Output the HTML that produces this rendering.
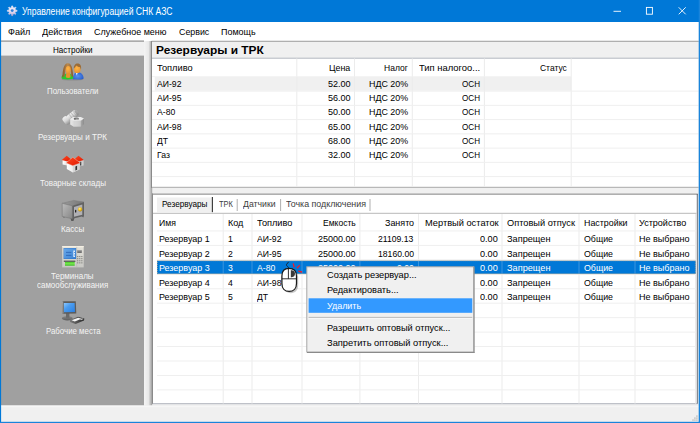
<!DOCTYPE html>
<html lang="ru">
<head>
<meta charset="utf-8">
<title>Управление конфигурацией СНК АЗС</title>
<style>
*{box-sizing:border-box;margin:0;padding:0}
html,body{width:700px;height:423px;overflow:hidden;background:#f0f0f0}
body{position:relative;font-family:"Liberation Sans",sans-serif;color:#000}
svg{position:absolute;left:0;top:0}
.t{position:absolute;white-space:nowrap;transform-origin:0 50%}
</style>
</head>
<body>
<svg id="bg" width="700" height="423" viewBox="0 0 700 423">
<rect x="0" y="0" width="700" height="423" fill="#f0f0f0"/>
<rect x="0" y="0" width="700" height="22" fill="#0078d7"/>
<rect x="1" y="22" width="698" height="19" fill="#fff"/>
<rect x="1" y="41" width="143" height="365" fill="#a0a0a0"/>
<rect x="1" y="40.6" width="143" height="1.1" fill="#6e6e6e"/>
<rect x="1" y="41.6" width="143.3" height="14" fill="#f0f0f0"/>
<defs><linearGradient id="sp" x1="0" x2="1" y1="0" y2="0"><stop offset="0" stop-color="#f4f4f4"/><stop offset="0.55" stop-color="#e8e8e8"/><stop offset="1" stop-color="#9a9a9a"/></linearGradient></defs>
<rect x="144" y="41" width="8.2" height="365" fill="url(#sp)"/>
<rect x="151.5" y="40.8" width="547.2" height="1" fill="#8c8c8c"/>
<rect x="151" y="41" width="1" height="147" fill="#8a8a8a"/>
<rect x="152" y="41.8" width="546.6" height="16.2" fill="#f0f0f0"/>
<rect x="152" y="58.3" width="546.6" height="129.2" fill="#fff"/>
<rect x="152" y="57.7" width="546.6" height="1" fill="#b4b8c0"/>
<rect x="152" y="186.8" width="546.6" height="1" fill="#a8a8a8"/>
<rect x="154.7" y="76.9" width="416.5" height="13.8" fill="#f0f0f0"/>
<rect x="296.3" y="58.5" width="1" height="128.5" fill="#ececec"/>
<rect x="354" y="58.5" width="1" height="128.5" fill="#ececec"/>
<rect x="411.8" y="58.5" width="1" height="128.5" fill="#ececec"/>
<rect x="483.9" y="58.5" width="1" height="128.5" fill="#ececec"/>
<rect x="570.7" y="58.5" width="1" height="128.5" fill="#ececec"/>
<rect x="152" y="90.6" width="546.6" height="1" fill="#efefef"/>
<rect x="152" y="104.85" width="546.6" height="1" fill="#efefef"/>
<rect x="152" y="119.1" width="546.6" height="1" fill="#efefef"/>
<rect x="152" y="133.35" width="546.6" height="1" fill="#efefef"/>
<rect x="152" y="147.6" width="546.6" height="1" fill="#efefef"/>
<rect x="152" y="161.85" width="546.6" height="1" fill="#efefef"/>
<rect x="152" y="176.1" width="546.6" height="1" fill="#efefef"/>
<rect x="152" y="76.3" width="419.5" height="0.8" fill="#f0f0f0"/>
<rect x="152.2" y="193.7" width="545.6" height="1.2" fill="#6e6e6e"/>
<rect x="152" y="193.5" width="1" height="210.5" fill="#8a8a8a"/>
<rect x="153" y="194.6" width="543.8" height="209" fill="#fff"/>
<rect x="696.8" y="194" width="1" height="210" fill="#6c7078"/>
<rect x="152.6" y="403.2" width="545" height="1" fill="#b0b4bc"/>
<rect x="157" y="197.5" width="54.8" height="14.7" fill="#f0f0f0"/>
<rect x="211.8" y="197" width="1.2" height="15.2" fill="#404040"/>
<rect x="236.7" y="199" width="1" height="12" fill="#b0b0b0"/>
<rect x="280.1" y="199" width="1" height="12" fill="#b0b0b0"/>
<rect x="369.5" y="199" width="1" height="12" fill="#b0b0b0"/>
<rect x="153" y="212.8" width="543.5" height="1" fill="#b8b8b8"/>
<rect x="222.7" y="214" width="1" height="189.5" fill="#ececec"/>
<rect x="251.5" y="214" width="1" height="189.5" fill="#ececec"/>
<rect x="301.5" y="214" width="1" height="189.5" fill="#ececec"/>
<rect x="359.4" y="214" width="1" height="189.5" fill="#ececec"/>
<rect x="418" y="214" width="1" height="189.5" fill="#ececec"/>
<rect x="501.5" y="214" width="1" height="189.5" fill="#ececec"/>
<rect x="578.5" y="214" width="1" height="189.5" fill="#ececec"/>
<rect x="634.5" y="214" width="1" height="189.5" fill="#ececec"/>
<rect x="695" y="214" width="1" height="189.5" fill="#ececec"/>
<rect x="157" y="230.45" width="539" height="1" fill="#efefef"/>
<rect x="157" y="244.9" width="539" height="1" fill="#efefef"/>
<rect x="157" y="259.35" width="539" height="1" fill="#efefef"/>
<rect x="157" y="273.8" width="539" height="1" fill="#efefef"/>
<rect x="157" y="288.25" width="539" height="1" fill="#efefef"/>
<rect x="157" y="302.7" width="539" height="1" fill="#efefef"/>
<rect x="157" y="317.15" width="539" height="1" fill="#efefef"/>
<rect x="157" y="331.6" width="539" height="1" fill="#efefef"/>
<rect x="157" y="346.05" width="539" height="1" fill="#efefef"/>
<rect x="157" y="360.5" width="539" height="1" fill="#efefef"/>
<rect x="157" y="374.95" width="539" height="1" fill="#efefef"/>
<rect x="157" y="389.4" width="539" height="1" fill="#efefef"/>
<rect x="157" y="260.7" width="538.8" height="13.2" fill="#0078d7"/>
<rect x="222.7" y="261" width="1" height="12.8" fill="#3a94df"/>
<rect x="251.5" y="261" width="1" height="12.8" fill="#3a94df"/>
<rect x="301.5" y="261" width="1" height="12.8" fill="#3a94df"/>
<rect x="359.4" y="261" width="1" height="12.8" fill="#3a94df"/>
<rect x="418" y="261" width="1" height="12.8" fill="#3a94df"/>
<rect x="501.5" y="261" width="1" height="12.8" fill="#3a94df"/>
<rect x="578.5" y="261" width="1" height="12.8" fill="#3a94df"/>
<rect x="634.5" y="261" width="1" height="12.8" fill="#3a94df"/>
<rect x="157.4" y="260.7" width="538" height="13.1" fill="none" stroke="#f0b878" stroke-width="0.7" stroke-dasharray="1 1"/>
<rect x="1" y="405.2" width="698" height="18" fill="#f0f0f0"/>
<rect x="1" y="406.3" width="698" height="0.8" fill="#f8f8f8"/>
<rect x="696.2" y="419.4" width="1.4" height="1.4" fill="#bcbcbc"/>
<rect x="694.2" y="419.4" width="1.4" height="1.4" fill="#bcbcbc"/>
<rect x="692.3" y="419.4" width="1.4" height="1.4" fill="#bcbcbc"/>
<rect x="696.2" y="417.4" width="1.4" height="1.4" fill="#bcbcbc"/>
<rect x="694.2" y="417.4" width="1.4" height="1.4" fill="#bcbcbc"/>
<rect x="696.2" y="415.4" width="1.4" height="1.4" fill="#bcbcbc"/>
<rect x="0" y="0" width="1.1" height="423" fill="#0078d7"/>
<rect x="698.7" y="0" width="1.3" height="423" fill="#1a84da"/>
<rect x="0" y="421.8" width="700" height="1.2" fill="#1a84da"/>
<defs><linearGradient id="gg" x1="0" y1="0" x2="0" y2="1"><stop offset="0" stop-color="#f2eefa"/><stop offset="0.6" stop-color="#e2daf0"/><stop offset="1" stop-color="#b9a6cf"/></linearGradient></defs><path d="M11.60 7.35 L11.66 5.93 L12.74 5.93 L12.80 7.35 L14.21 7.94 L15.26 6.98 L16.02 7.74 L15.06 8.79 L15.65 10.20 L17.07 10.26 L17.07 11.34 L15.65 11.40 L15.06 12.81 L16.02 13.86 L15.26 14.62 L14.21 13.66 L12.80 14.25 L12.74 15.67 L11.66 15.67 L11.60 14.25 L10.19 13.66 L9.14 14.62 L8.38 13.86 L9.34 12.81 L8.75 11.40 L7.33 11.34 L7.33 10.26 L8.75 10.20 L9.34 8.79 L8.38 7.74 L9.14 6.98 L10.19 7.94Z" fill="url(#gg)" stroke="url(#gg)" stroke-width="0.6" stroke-linejoin="round"/><circle cx="12.2" cy="10.600000000000001" r="1.45" fill="#2f7fd6"/>
<defs>
<linearGradient id="uh" x1="0" y1="0" x2="1" y2="0"><stop offset="0" stop-color="#8a5a2c"/><stop offset="0.5" stop-color="#b98a50"/><stop offset="1" stop-color="#8a5a2c"/></linearGradient>
<radialGradient id="uf" cx="0.45" cy="0.35" r="0.7"><stop offset="0" stop-color="#ffb648"/><stop offset="1" stop-color="#e8902a"/></radialGradient>
<linearGradient id="ug" x1="0" y1="0" x2="0" y2="1"><stop offset="0" stop-color="#3fb83a"/><stop offset="1" stop-color="#1fd02a"/></linearGradient>
<radialGradient id="ub" cx="0.45" cy="0.55" r="0.7"><stop offset="0" stop-color="#5a94ee"/><stop offset="1" stop-color="#1f52c4"/></radialGradient>
</defs>
<g>
<ellipse cx="72.5" cy="79.400" rx="11" ry="1.200" fill="#000" opacity="0.12"/>
<path d="M72.8 79.200c0-3.500 1.600-6.800 4.600-7.200c3.200 0 6.200 2.800 6.200 6.200c0 1-2.800 1.300-5.600 1.300z" fill="url(#ub)"/>
<path d="M75.600 72.600l1.200 2.800l0.900-2.400z" fill="#e8f0ff"/>
<ellipse cx="77.300" cy="69.400" rx="3.300" ry="3.700" fill="url(#uf)"/>
<path d="M73.800 68.600c-0.200-3.200 1.600-5.200 3.800-5.200c2.800 0 4 2.600 3.400 6c-0.400-0.800-0.800-1.600-1-2.400c-1.600-0.200-3-0.800-3.800-1.600c-0.600 1.200-1.400 2.400-2.400 3.200z" fill="#9c6c36"/>
<path d="M61.500 78c0-2.600 1.600-4 3.600-4.200h5.200c2 0.200 3 1.600 3 4.200c0 1-2.600 1.400-5.900 1.400s-5.900-0.400-5.900-1.400z" fill="url(#ug)"/>
<path d="M62.400 77.200c0.300-6.400 1.100-14 5.500-14c4.400 0 5 7.600 5.300 13.600c-0.600 0.300-1.300-0.300-1.900-1.300l-0.700-5.700h-5l-0.900 6c-0.700 1.100-1.500 1.600-2.300 1.400z" fill="url(#uh)"/>
<path d="M66.300 73h3.800l0.500 4.200c-1.500 1-3.300 1-4.800 0z" fill="#e8922c"/>
<ellipse cx="68.200" cy="69.800" rx="2.600" ry="3.800" fill="url(#uf)"/>
</g>
<defs>
<linearGradient id="n1" x1="0" y1="0" x2="1" y2="0"><stop offset="0" stop-color="#e6e6e6"/><stop offset="0.45" stop-color="#d2d2d2"/><stop offset="1" stop-color="#8c8c8c"/></linearGradient>
<linearGradient id="n3" x1="0" y1="0" x2="0" y2="1"><stop offset="0" stop-color="#f2f2f2"/><stop offset="0.5" stop-color="#d6d6d6"/><stop offset="1" stop-color="#8e8e8e"/></linearGradient>
<linearGradient id="n2" x1="0" y1="0" x2="1" y2="1"><stop offset="0" stop-color="#efefef"/><stop offset="1" stop-color="#9c9c9c"/></linearGradient>
</defs>
<g>
<g transform="translate(1.300 0.400) rotate(-38 69 117)">
<rect x="61.200" y="112.600" width="5.800" height="8.800" rx="2.200" fill="url(#n3)"/>
<rect x="66" y="113.600" width="12" height="6.800" rx="2.600" fill="url(#n3)"/>
<rect x="69.500" y="113.800" width="0.900" height="6.400" fill="#9a9a9a" opacity="0.55"/>
<rect x="72" y="113.800" width="0.900" height="6.400" fill="#9a9a9a" opacity="0.55"/>
<rect x="74.500" y="113.800" width="0.900" height="6.400" fill="#9a9a9a" opacity="0.55"/>
<rect x="75.800" y="114" width="2.200" height="6" rx="1.200" fill="#8a8a8a" opacity="0.7"/>
</g>
<path d="M70.200 119.200l3-2.200h7.600l3.200 1.600v5.600l-3.200 2.400h-7.400l-3.200-2z" fill="url(#n1)"/>
<path d="M70.200 119.200l3-2.200h7.600l3.200 1.600l-3.200 2.200h-7.400z" fill="#ececec"/>
<path d="M73.400 120.800h7.400v5.800h-7.400z" fill="#d4d4d4" opacity="0.7"/>
<ellipse cx="76.300" cy="118.800" rx="2.600" ry="1.200" fill="#6a6a6a"/>
<ellipse cx="76.900" cy="119.200" rx="1.700" ry="0.700" fill="#b8b8b8"/>
</g>
<defs>
<linearGradient id="hr" x1="0" y1="0" x2="1" y2="1"><stop offset="0" stop-color="#ff4a22"/><stop offset="1" stop-color="#e01800"/></linearGradient>
<linearGradient id="hw" x1="0" y1="0" x2="1" y2="0"><stop offset="0" stop-color="#ffffff"/><stop offset="1" stop-color="#d8d8d8"/></linearGradient>
</defs>
<g>
<path d="M62.600 159.800h5.800v6l-5.800-1.400z" fill="url(#hw)"/>
<path d="M66.700 155.800l4.800 4l-4 1.800l-5.800-1.600z" fill="url(#hr)"/>
<path d="M78.800 160.200l4.800-0.400v5.600l-4.800 1.200z" fill="#d0d0d0"/>
<path d="M80 161.800h1.300v3.600h-1.300z" fill="#444"/>
<path d="M78.500 155.800l5.300 4.200l-5 1.600l-5-1.800z" fill="url(#hr)"/>
<path d="M66.800 163l6 2l6.800-2.200v6.600l-6.800 3l-6-3.400z" fill="url(#hw)"/>
<path d="M72.800 165l6.800-2.200v6.600l-6.800 3z" fill="#cfcfcf" opacity="0.75"/>
<path d="M75.400 166.400l1.700-0.600v4l-1.700 0.800z" fill="#333"/>
<path d="M72.750 157.300l7.600 5.600l-7.600 2.800l-6.600-2.800z" fill="url(#hr)" stroke="#ffd8cc" stroke-width="0.350"/>
</g>
<defs>
<linearGradient id="s1" x1="0" y1="0" x2="1" y2="1"><stop offset="0" stop-color="#bcbcbc"/><stop offset="1" stop-color="#868686"/></linearGradient>
<linearGradient id="s2" x1="0" y1="0" x2="1" y2="0"><stop offset="0" stop-color="#9a9a9a"/><stop offset="1" stop-color="#767676"/></linearGradient>
<radialGradient id="s3" cx="0.4" cy="0.35" r="0.7"><stop offset="0" stop-color="#fff08a"/><stop offset="0.5" stop-color="#f0c020"/><stop offset="1" stop-color="#b08000"/></radialGradient>
</defs>
<g>
<path d="M62.800 216l0.800 1.800l1.800-0.800zM70.400 218l0.900 3h2.200l0.900-3zM81.800 216.200l1.400 1.400l0.800-1.800z" fill="#5a5a5a"/>
<path d="M62.200 203.300l11.500-2.900l10.200 1.600l-11.500 3.800z" fill="url(#s2)" stroke="#7c7c7c" stroke-width="0.500"/>
<path d="M62.200 203.300l10.200 2.500v13l-10.200-2.400z" fill="url(#s1)" stroke="#787878" stroke-width="0.600"/>
<path d="M72.400 205.800l11.600-3.700v14l-11.600 2.700z" fill="#626262"/>
<path d="M74 207l8.300-2.600v10.400l-8.300 2z" fill="#b0b0b4"/>
<rect x="75" y="209.800" width="1.300" height="2.800" rx="0.600" fill="#222"/>
<circle cx="80.100" cy="209.400" r="2.100" fill="url(#s3)"/>
</g>
<defs>
<linearGradient id="a1" x1="0" y1="0" x2="0" y2="1"><stop offset="0" stop-color="#f4efe2"/><stop offset="0.1" stop-color="#e2e0d8"/><stop offset="1" stop-color="#c8c8c4"/></linearGradient>
<linearGradient id="a2" x1="0" y1="0" x2="1" y2="1"><stop offset="0" stop-color="#6aa8e8"/><stop offset="1" stop-color="#3a82d4"/></linearGradient>
<linearGradient id="a3" x1="0" y1="0" x2="0" y2="1"><stop offset="0" stop-color="#48c828"/><stop offset="0.5" stop-color="#78e850"/><stop offset="1" stop-color="#38b820"/></linearGradient>
</defs>
<g>
<rect x="62.200" y="246" width="21.500" height="21.400" fill="url(#a1)"/>
<rect x="62.200" y="246" width="21.500" height="0.800" fill="#f6f0e4"/>
<rect x="63.600" y="248" width="12.600" height="11" fill="#2f6fc0"/>
<rect x="64" y="248.400" width="11.800" height="10.200" fill="url(#a2)"/>
<rect x="66" y="251.900" width="5.400" height="0.800" fill="#2a62b4"/>
<rect x="66" y="254.900" width="5.400" height="0.800" fill="#2a62b4"/>
<path d="M73.400 250.400h1.500v1.600h-0.800v1h0.800v1.600h-0.800v1h0.800v1.400h-1.500z" fill="#f4f8ff"/>
<rect x="77.200" y="250.400" width="4.600" height="2.600" fill="#707070"/>
<rect x="77.200" y="250.400" width="4.600" height="0.900" fill="#a0a0a0"/>
<rect x="63.800" y="260.600" width="11.600" height="1.300" fill="#555"/>
<rect x="65" y="261.900" width="9.700" height="3.800" fill="url(#a3)"/>
<rect x="76.600" y="246.800" width="0.500" height="20.500" fill="#b4b4b0"/>
<rect x="77.20" y="256.00" width="1.100" height="1.100" fill="#7c7c78"/><rect x="79.25" y="256.00" width="1.100" height="1.100" fill="#7c7c78"/><rect x="81.30" y="256.00" width="1.100" height="1.100" fill="#7c7c78"/><rect x="77.20" y="258.10" width="1.100" height="1.100" fill="#7c7c78"/><rect x="79.25" y="258.10" width="1.100" height="1.100" fill="#7c7c78"/><rect x="81.30" y="258.10" width="1.100" height="1.100" fill="#7c7c78"/><rect x="77.20" y="260.20" width="1.100" height="1.100" fill="#7c7c78"/><rect x="79.25" y="260.20" width="1.100" height="1.100" fill="#7c7c78"/><rect x="81.30" y="260.20" width="1.100" height="1.100" fill="#7c7c78"/><rect x="77.20" y="262.30" width="1.100" height="1.100" fill="#7c7c78"/><rect x="79.25" y="262.30" width="1.100" height="1.100" fill="#7c7c78"/><rect x="81.30" y="262.30" width="1.100" height="1.100" fill="#7c7c78"/></g>
<defs>
<linearGradient id="m1" x1="0" y1="0" x2="1" y2="1"><stop offset="0" stop-color="#8cc8ff"/><stop offset="0.4" stop-color="#4a9cf0"/><stop offset="1" stop-color="#2a7ee0"/></linearGradient>
<linearGradient id="m2" x1="0" y1="0" x2="0" y2="1"><stop offset="0" stop-color="#8a8a8a"/><stop offset="1" stop-color="#5a5a5a"/></linearGradient>
<linearGradient id="m3" x1="0" y1="0" x2="1" y2="0"><stop offset="0" stop-color="#7a7a7a"/><stop offset="1" stop-color="#2a2a2a"/></linearGradient>
</defs>
<g>
<ellipse cx="67.300" cy="318.300" rx="5.500" ry="2.200" fill="url(#m2)"/>
<rect x="66" y="312.800" width="3.400" height="5" fill="#6a6a6a"/>
<path d="M62 301.300h13.800l0.500 12.200l-13.800 0.200z" fill="#5c5c5c"/>
<path d="M62 301.300h1.200l0.300 12.200h-1z" fill="#a0a0a0"/>
<path d="M63.800 302.900h10.800l0.400 9.200l-11 0.100z" fill="url(#m1)"/>
<path d="M69.800 320l8.200-3.200l6.300 1.800l-0.300 2l-8.400 3.400l-5.600-2z" fill="url(#m3)"/>
<path d="M71.600 320.200l6.600-2.400l3.200 0.900l-6.600 2.700z" fill="#f4f4f4"/>
<path d="M80 319l2.400-0.600l1.200 0.600l-2.600 1z" fill="#d8d8d8"/>
</g>
<g fill="none" stroke="#fff" stroke-width="0.9"><path d="M613.5 11.3h7.5"/><rect x="646.4" y="7.400" width="6" height="6.800"/><path d="M678.7 7.300l7 7M685.7 7.300l-7 7"/></g>
</svg>
<div class="t" style="left:22.0px;top:5.2px;font-size:10px;line-height:13px;transform:scaleX(0.858);color:#fff">Управление конфигурацией СНК АЗС</div>
<div class="t" style="left:8.0px;top:26.0px;font-size:9.6px;line-height:12px;transform:scaleX(0.945)">Файл</div>
<div class="t" style="left:42.0px;top:26.0px;font-size:9.6px;line-height:12px;transform:scaleX(0.951)">Действия</div>
<div class="t" style="left:94.0px;top:26.0px;font-size:9.6px;line-height:12px;transform:scaleX(0.934)">Служебное меню</div>
<div class="t" style="left:179.3px;top:26.0px;font-size:9.6px;line-height:12px;transform:scaleX(0.922)">Сервис</div>
<div class="t" style="left:221.0px;top:26.0px;font-size:9.6px;line-height:12px;transform:scaleX(0.934)">Помощь</div>
<div class="t" style="left:52.7px;top:43.7px;font-size:9.3px;line-height:12px;transform:scaleX(0.869)">Настройки</div>
<div class="t" style="left:46.7px;top:84.7px;font-size:9.3px;line-height:12px;transform:scaleX(0.847);color:#f4f4f4">Пользователи</div>
<div class="t" style="left:38.3px;top:130.8px;font-size:9.3px;line-height:12px;transform:scaleX(0.871);color:#f4f4f4">Резервуары и ТРК</div>
<div class="t" style="left:40.1px;top:176.8px;font-size:9.3px;line-height:12px;transform:scaleX(0.863);color:#f4f4f4">Товарные склады</div>
<div class="t" style="left:60.7px;top:223.0px;font-size:9.3px;line-height:12px;transform:scaleX(0.877);color:#f4f4f4">Кассы</div>
<div class="t" style="left:50.9px;top:270.0px;font-size:9.3px;line-height:12px;transform:scaleX(0.861);color:#f4f4f4">Терминалы</div>
<div class="t" style="left:37.1px;top:278.6px;font-size:9.3px;line-height:12px;transform:scaleX(0.854);color:#f4f4f4">самообслуживания</div>
<div class="t" style="left:45.6px;top:325.0px;font-size:9.3px;line-height:12px;transform:scaleX(0.846);color:#f4f4f4">Рабочие места</div>
<div class="t" style="left:155.8px;top:42.5px;font-size:11.2px;line-height:15px;transform:scaleX(1.063);font-weight:bold">Резервуары и ТРК</div>
<div class="t" style="left:157.0px;top:62.1px;font-size:9.6px;line-height:12px;transform:scaleX(0.964)">Топливо</div>
<div class="t" style="left:328.9px;top:62.1px;font-size:9.6px;line-height:12px;transform:scaleX(0.923)">Цена</div>
<div class="t" style="left:384.0px;top:62.1px;font-size:9.6px;line-height:12px;transform:scaleX(0.888)">Налог</div>
<div class="t" style="left:419.0px;top:62.1px;font-size:9.6px;line-height:12px;transform:scaleX(0.981)">Тип налогоо...</div>
<div class="t" style="left:539.7px;top:62.1px;font-size:9.6px;line-height:12px;transform:scaleX(0.884)">Статус</div>
<div class="t" style="left:157.0px;top:77.9px;font-size:9.6px;line-height:12px;transform:scaleX(0.900)">АИ-92</div>
<div class="t" style="left:327.6px;top:77.9px;font-size:9.6px;line-height:12px;transform:scaleX(0.941)">52.00</div>
<div class="t" style="left:368.7px;top:77.9px;font-size:9.6px;line-height:12px;transform:scaleX(0.926)">НДС 20%</div>
<div class="t" style="left:462.4px;top:77.9px;font-size:9.6px;line-height:12px;transform:scaleX(0.844)">ОСН</div>
<div class="t" style="left:157.0px;top:92.1px;font-size:9.6px;line-height:12px;transform:scaleX(0.900)">АИ-95</div>
<div class="t" style="left:327.6px;top:92.1px;font-size:9.6px;line-height:12px;transform:scaleX(0.941)">56.00</div>
<div class="t" style="left:368.7px;top:92.1px;font-size:9.6px;line-height:12px;transform:scaleX(0.926)">НДС 20%</div>
<div class="t" style="left:462.4px;top:92.1px;font-size:9.6px;line-height:12px;transform:scaleX(0.844)">ОСН</div>
<div class="t" style="left:157.0px;top:106.4px;font-size:9.6px;line-height:12px;transform:scaleX(0.900)">А-80</div>
<div class="t" style="left:327.6px;top:106.4px;font-size:9.6px;line-height:12px;transform:scaleX(0.941)">50.00</div>
<div class="t" style="left:368.7px;top:106.4px;font-size:9.6px;line-height:12px;transform:scaleX(0.926)">НДС 20%</div>
<div class="t" style="left:462.4px;top:106.4px;font-size:9.6px;line-height:12px;transform:scaleX(0.844)">ОСН</div>
<div class="t" style="left:157.0px;top:120.6px;font-size:9.6px;line-height:12px;transform:scaleX(0.900)">АИ-98</div>
<div class="t" style="left:327.6px;top:120.6px;font-size:9.6px;line-height:12px;transform:scaleX(0.941)">65.00</div>
<div class="t" style="left:368.7px;top:120.6px;font-size:9.6px;line-height:12px;transform:scaleX(0.926)">НДС 20%</div>
<div class="t" style="left:462.4px;top:120.6px;font-size:9.6px;line-height:12px;transform:scaleX(0.844)">ОСН</div>
<div class="t" style="left:157.0px;top:134.9px;font-size:9.6px;line-height:12px;transform:scaleX(0.900)">ДТ</div>
<div class="t" style="left:327.6px;top:134.9px;font-size:9.6px;line-height:12px;transform:scaleX(0.941)">68.00</div>
<div class="t" style="left:368.7px;top:134.9px;font-size:9.6px;line-height:12px;transform:scaleX(0.926)">НДС 20%</div>
<div class="t" style="left:462.4px;top:134.9px;font-size:9.6px;line-height:12px;transform:scaleX(0.844)">ОСН</div>
<div class="t" style="left:157.0px;top:149.1px;font-size:9.6px;line-height:12px;transform:scaleX(0.900)">Газ</div>
<div class="t" style="left:327.6px;top:149.1px;font-size:9.6px;line-height:12px;transform:scaleX(0.941)">32.00</div>
<div class="t" style="left:368.7px;top:149.1px;font-size:9.6px;line-height:12px;transform:scaleX(0.926)">НДС 20%</div>
<div class="t" style="left:462.4px;top:149.1px;font-size:9.6px;line-height:12px;transform:scaleX(0.844)">ОСН</div>
<div class="t" style="left:161.6px;top:197.5px;font-size:9.3px;line-height:12px;transform:scaleX(0.880)">Резервуары</div>
<div class="t" style="left:218.6px;top:197.5px;font-size:9.3px;line-height:12px;transform:scaleX(0.798);color:#3c3c3c">ТРК</div>
<div class="t" style="left:243.0px;top:197.5px;font-size:9.3px;line-height:12px;transform:scaleX(0.936);color:#3c3c3c">Датчики</div>
<div class="t" style="left:286.0px;top:197.5px;font-size:9.3px;line-height:12px;transform:scaleX(0.953);color:#3c3c3c">Точка подключения</div>
<div class="t" style="left:158.8px;top:217.4px;font-size:9.6px;line-height:12px;transform:scaleX(0.900)">Имя</div>
<div class="t" style="left:227.6px;top:217.4px;font-size:9.6px;line-height:12px;transform:scaleX(0.944)">Код</div>
<div class="t" style="left:257.0px;top:217.4px;font-size:9.6px;line-height:12px;transform:scaleX(0.958)">Топливо</div>
<div class="t" style="left:322.8px;top:217.4px;font-size:9.6px;line-height:12px;transform:scaleX(0.891)">Емкость</div>
<div class="t" style="left:384.5px;top:217.4px;font-size:9.6px;line-height:12px;transform:scaleX(0.931)">Занято</div>
<div class="t" style="left:424.5px;top:217.4px;font-size:9.6px;line-height:12px;transform:scaleX(0.965)">Мертвый остаток</div>
<div class="t" style="left:506.5px;top:217.4px;font-size:9.6px;line-height:12px;transform:scaleX(0.962)">Оптовый отпуск</div>
<div class="t" style="left:584.0px;top:217.4px;font-size:9.6px;line-height:12px;transform:scaleX(0.925)">Настройки</div>
<div class="t" style="left:639.0px;top:217.4px;font-size:9.6px;line-height:12px;transform:scaleX(0.942)">Устройство</div>
<div class="t" style="left:158.8px;top:233.2px;font-size:9.6px;line-height:12px;transform:scaleX(0.933)">Резервуар 1</div>
<div class="t" style="left:227.8px;top:233.2px;font-size:9.6px;line-height:12px;transform:scaleX(0.900)">1</div>
<div class="t" style="left:257.0px;top:233.2px;font-size:9.6px;line-height:12px;transform:scaleX(0.900)">АИ-92</div>
<div class="t" style="left:318.0px;top:233.2px;font-size:9.6px;line-height:12px;transform:scaleX(0.940)">25000.00</div>
<div class="t" style="left:378.2px;top:233.2px;font-size:9.6px;line-height:12px;transform:scaleX(0.900)">21109.13</div>
<div class="t" style="left:480.4px;top:233.2px;font-size:9.6px;line-height:12px;transform:scaleX(0.953)">0.00</div>
<div class="t" style="left:506.5px;top:233.2px;font-size:9.6px;line-height:12px;transform:scaleX(0.958)">Запрещен</div>
<div class="t" style="left:584.0px;top:233.2px;font-size:9.6px;line-height:12px;transform:scaleX(0.919)">Общие</div>
<div class="t" style="left:639.0px;top:233.2px;font-size:9.6px;line-height:12px;transform:scaleX(0.942)">Не выбрано</div>
<div class="t" style="left:158.8px;top:247.6px;font-size:9.6px;line-height:12px;transform:scaleX(0.933)">Резервуар 2</div>
<div class="t" style="left:227.8px;top:247.6px;font-size:9.6px;line-height:12px;transform:scaleX(0.900)">2</div>
<div class="t" style="left:257.0px;top:247.6px;font-size:9.6px;line-height:12px;transform:scaleX(0.900)">АИ-95</div>
<div class="t" style="left:318.0px;top:247.6px;font-size:9.6px;line-height:12px;transform:scaleX(0.940)">25000.00</div>
<div class="t" style="left:377.6px;top:247.6px;font-size:9.6px;line-height:12px;transform:scaleX(0.900)">18160.00</div>
<div class="t" style="left:480.4px;top:247.6px;font-size:9.6px;line-height:12px;transform:scaleX(0.953)">0.00</div>
<div class="t" style="left:506.5px;top:247.6px;font-size:9.6px;line-height:12px;transform:scaleX(0.958)">Запрещен</div>
<div class="t" style="left:584.0px;top:247.6px;font-size:9.6px;line-height:12px;transform:scaleX(0.919)">Общие</div>
<div class="t" style="left:639.0px;top:247.6px;font-size:9.6px;line-height:12px;transform:scaleX(0.942)">Не выбрано</div>
<div class="t" style="left:158.8px;top:262.1px;font-size:9.6px;line-height:12px;transform:scaleX(0.933);color:#fff">Резервуар 3</div>
<div class="t" style="left:227.8px;top:262.1px;font-size:9.6px;line-height:12px;transform:scaleX(0.900);color:#fff">3</div>
<div class="t" style="left:257.0px;top:262.1px;font-size:9.6px;line-height:12px;transform:scaleX(0.900);color:#fff">А-80</div>
<div class="t" style="left:318.0px;top:262.1px;font-size:9.6px;line-height:12px;transform:scaleX(0.940);color:#fff">25000.00</div>
<div class="t" style="left:396.8px;top:262.1px;font-size:9.6px;line-height:12px;transform:scaleX(0.900);color:#fff">0.00</div>
<div class="t" style="left:480.4px;top:262.1px;font-size:9.6px;line-height:12px;transform:scaleX(0.953);color:#fff">0.00</div>
<div class="t" style="left:506.5px;top:262.1px;font-size:9.6px;line-height:12px;transform:scaleX(0.958);color:#fff">Запрещен</div>
<div class="t" style="left:584.0px;top:262.1px;font-size:9.6px;line-height:12px;transform:scaleX(0.919);color:#fff">Общие</div>
<div class="t" style="left:639.0px;top:262.1px;font-size:9.6px;line-height:12px;transform:scaleX(0.942);color:#fff">Не выбрано</div>
<div class="t" style="left:158.8px;top:276.5px;font-size:9.6px;line-height:12px;transform:scaleX(0.933)">Резервуар 4</div>
<div class="t" style="left:227.8px;top:276.5px;font-size:9.6px;line-height:12px;transform:scaleX(0.900)">4</div>
<div class="t" style="left:257.0px;top:276.5px;font-size:9.6px;line-height:12px;transform:scaleX(0.900)">АИ-98</div>
<div class="t" style="left:318.0px;top:276.5px;font-size:9.6px;line-height:12px;transform:scaleX(0.940)">25000.00</div>
<div class="t" style="left:396.8px;top:276.5px;font-size:9.6px;line-height:12px;transform:scaleX(0.900)">0.00</div>
<div class="t" style="left:480.4px;top:276.5px;font-size:9.6px;line-height:12px;transform:scaleX(0.953)">0.00</div>
<div class="t" style="left:506.5px;top:276.5px;font-size:9.6px;line-height:12px;transform:scaleX(0.958)">Запрещен</div>
<div class="t" style="left:584.0px;top:276.5px;font-size:9.6px;line-height:12px;transform:scaleX(0.919)">Общие</div>
<div class="t" style="left:639.0px;top:276.5px;font-size:9.6px;line-height:12px;transform:scaleX(0.942)">Не выбрано</div>
<div class="t" style="left:158.8px;top:291.0px;font-size:9.6px;line-height:12px;transform:scaleX(0.933)">Резервуар 5</div>
<div class="t" style="left:227.8px;top:291.0px;font-size:9.6px;line-height:12px;transform:scaleX(0.900)">5</div>
<div class="t" style="left:257.0px;top:291.0px;font-size:9.6px;line-height:12px;transform:scaleX(0.900)">ДТ</div>
<div class="t" style="left:318.0px;top:291.0px;font-size:9.6px;line-height:12px;transform:scaleX(0.940)">25000.00</div>
<div class="t" style="left:396.8px;top:291.0px;font-size:9.6px;line-height:12px;transform:scaleX(0.900)">0.00</div>
<div class="t" style="left:480.4px;top:291.0px;font-size:9.6px;line-height:12px;transform:scaleX(0.953)">0.00</div>
<div class="t" style="left:506.5px;top:291.0px;font-size:9.6px;line-height:12px;transform:scaleX(0.958)">Запрещен</div>
<div class="t" style="left:584.0px;top:291.0px;font-size:9.6px;line-height:12px;transform:scaleX(0.919)">Общие</div>
<div class="t" style="left:639.0px;top:291.0px;font-size:9.6px;line-height:12px;transform:scaleX(0.942)">Не выбрано</div>
<svg id="overlay" width="700" height="423" viewBox="0 0 700 423">
<g>
<path d="M282.600 276.200c0-5.400 2.600-7.800 6.600-7.800s7.600 2.400 7.600 7.800v7.400c0 5-3 8.200-7.300 8.200s-6.900-3.200-6.900-8.200z" fill="#000" opacity="0.22" transform="translate(1.400 1.400)"/>
<path d="M281.900 276c0-5.200 2.800-7.600 7-7.600s7.600 2.400 7.600 7.600v7.400c0 5-3.100 8-7.400 8s-7.200-3-7.200-8z" fill="#fff" stroke="#1a1a1a" stroke-width="1.250"/>
<path d="M281.900 278.800h14.600M288.400 268.500v10.300" fill="none" stroke="#1a1a1a" stroke-width="0.900"/>
<path d="M290.800 270.200h1c2.400 0.400 3.200 1.800 3.200 3.600c0 2-1.200 3.200-3.200 3.400h-1z" fill="#3a3a3a"/>
<path d="M288.500 268.400c0.600-1.600-2.600-2.400-2-3.800c0.400-1 1.600-1.800 2.200-2.800" fill="none" stroke="#1a1a1a" stroke-width="0.900"/>
<path d="M293.300 263.900l0.800 2.800M299.600 265.400l-2.200 2.400M298.700 271.200l2.900 0.800" fill="none" stroke="#ee1c2c" stroke-width="1.350" stroke-linecap="round"/>
</g>
<rect x="306.8" y="266.8" width="167.1" height="85.2" fill="#f0f0f0" stroke="#a8a8a8" stroke-width="1"/>
<rect x="473.5" y="267" width="1" height="86" fill="#8a8a8a"/>
<rect x="307" y="352" width="167.5" height="1" fill="#8a8a8a"/>
<rect x="308.6" y="298.3" width="163.7" height="14.5" fill="#3399ff"/>
<rect x="308.6" y="316.9" width="163.7" height="1" fill="#b4b4b4"/>
<rect x="308.6" y="317.9" width="163.7" height="0.8" fill="#fafafa"/>
</svg>
<div class="t" style="left:326.9px;top:269.1px;font-size:9.6px;line-height:12px;transform:scaleX(0.966)">Создать резервуар...</div>
<div class="t" style="left:326.9px;top:284.3px;font-size:9.6px;line-height:12px;transform:scaleX(0.964)">Редактировать...</div>
<div class="t" style="left:326.9px;top:299.6px;font-size:9.6px;line-height:12px;transform:scaleX(0.931);color:#fff">Удалить</div>
<div class="t" style="left:326.9px;top:322.1px;font-size:9.6px;line-height:12px;transform:scaleX(0.964)">Разрешить оптовый отпуск...</div>
<div class="t" style="left:326.9px;top:337.4px;font-size:9.6px;line-height:12px;transform:scaleX(0.971)">Запретить оптовый отпуск...</div>
</body>
</html>
